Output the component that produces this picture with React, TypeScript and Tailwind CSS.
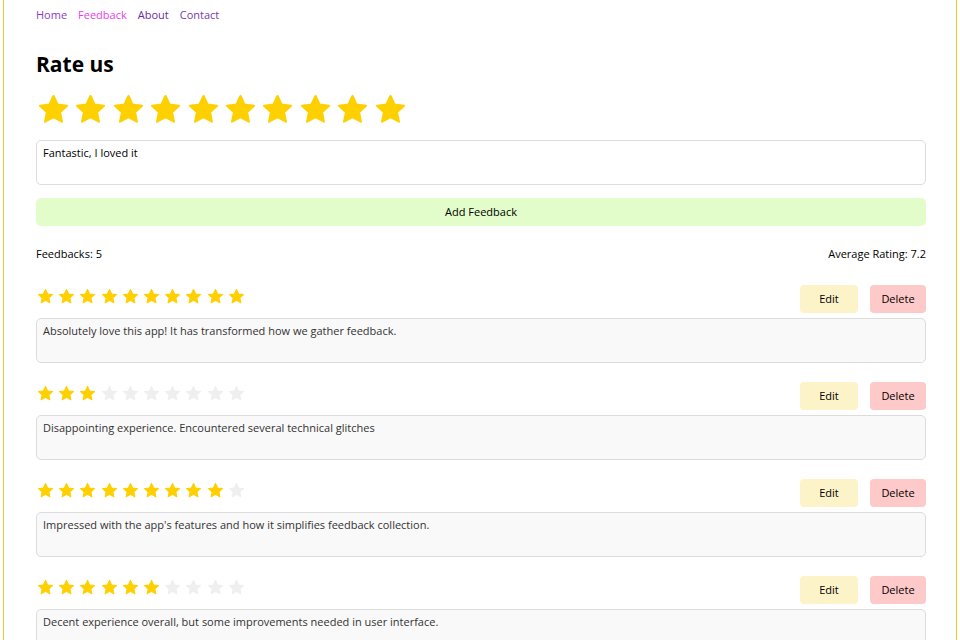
const feedbacks = [
  { rating: 10, text: "Absolutely love this app! It has transformed how we gather feedback." },
  { rating: 3, text: "Disappointing experience. Encountered several technical glitches" },
  { rating: 9, text: "Impressed with the app's features and how it simplifies feedback collection." },
  { rating: 6, text: "Decent experience overall, but some improvements needed in user interface." },
  { rating: 8, text: "Great support team, quick to respond and very helpful." },
];

const Star = ({ size, filled }: { size: number; filled: boolean }) => (
  <svg width={size} height={size} viewBox="0 0 24 24" className="shrink-0">
    <path
      d="M12 2.2l2.95 6.3 6.85.8-5.1 4.7 1.4 6.8L12 17.4l-6.1 3.4 1.4-6.8-5.1-4.7 6.85-.8z"
      fill={filled ? "#ffd000" : "#efefef"}
      stroke={filled ? "#ffd000" : "#efefef"}
      strokeWidth="1.6"
      strokeLinejoin="round"
    />
  </svg>
);

const App = () => {
  return (
    <div className="h-[640px] overflow-hidden mx-[3px] border-x border-[#f3c623] pl-8 pr-[30px] pt-[8px] font-['Open_Sans',sans-serif] text-black">
      <nav className="flex gap-[11px] text-[11px] leading-[14px]">
        <a className="text-[#8a3cc8]">Home</a>
        <a className="text-[#ea3cf0]">Feedback</a>
        <a className="text-[#6a2aa0]">About</a>
        <a className="text-[#7a3aae]">Contact</a>
      </nav>

      <h1 className="mt-[29px] text-[21px] leading-[26px] font-bold">Rate us</h1>

      <div className="mt-[16px] flex gap-[4.4px] pl-[1px]">
        {Array.from({ length: 10 }).map((_, i) => (
          <Star key={i} size={33} filled />
        ))}
      </div>

      <div className="mt-[14px] h-[45px] rounded-[5px] border border-[#dcdcdc] px-[6px] pt-[4px] text-[11px] leading-[15px]">
        Fantastic, I loved it
      </div>

      <button className="mt-[13px] h-[28px] w-full rounded-[5px] bg-[#e2fdc9] text-[11px]">
        Add Feedback
      </button>

      <div className="mt-[20px] flex justify-between text-[11px] leading-[15px]">
        <span>Feedbacks: 5</span>
        <span>Average Rating: 7.2</span>
      </div>

      <div className="mt-[24px] flex flex-col gap-[19px]">
        {feedbacks.map((f, i) => (
          <div key={i} className="flex flex-col gap-[5px]">
            <div className="flex items-center justify-between">
              <div className="flex gap-[4.2px] pl-[1px] -mt-[6px]">
                {Array.from({ length: 10 }).map((_, j) => (
                  <Star key={j} size={17} filled={j < f.rating} />
                ))}
              </div>
              <div className="flex gap-[12px] text-[11px]">
                <button className="h-[28px] w-[58px] rounded-[4px] bg-[#fdf3c8]">Edit</button>
                <button className="h-[28px] w-[56px] rounded-[4px] bg-[#fec9c9]">Delete</button>
              </div>
            </div>
            <div className="h-[45px] rounded-[5px] border border-[#dcdcdc] bg-[#f9f9f9] px-[6px] pt-[4px] text-[11px] leading-[15px] text-[#333]">
              {f.text}
            </div>
          </div>
        ))}
      </div>
    </div>
  );
};

export default App;
